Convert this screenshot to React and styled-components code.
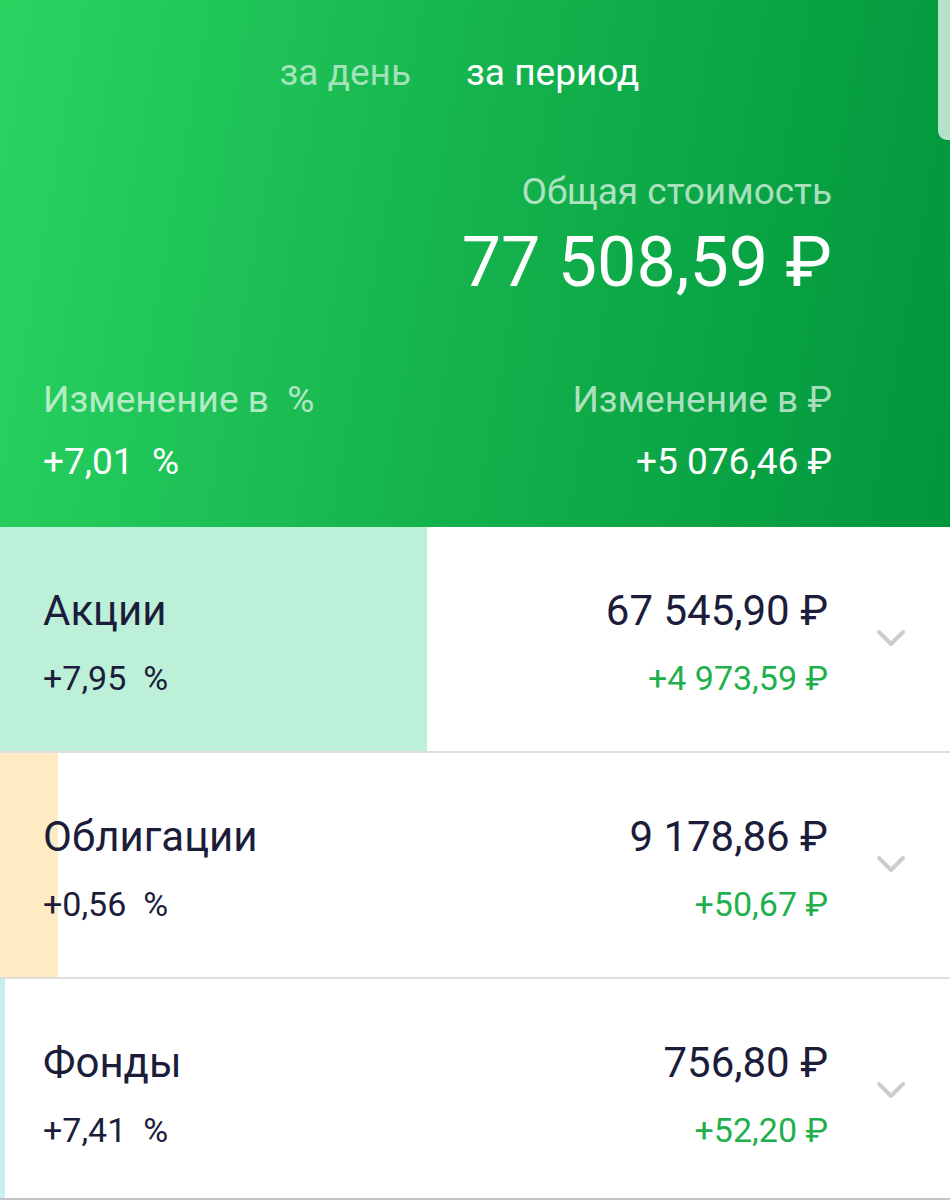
import React from "react";
import styled, { createGlobalStyle } from "styled-components";

const GlobalStyle = createGlobalStyle`
  html, body {
    margin: 0;
    padding: 0;
    background: #ffffff;
  }
  body {
    font-family: Roboto, "Noto Sans", "Liberation Sans", sans-serif;
    -webkit-font-smoothing: antialiased;
  }
`;

const Page = styled.div`
  width: 950px;
  overflow: hidden;
`;

const Header = styled.header`
  position: relative;
  height: 527px;
  box-sizing: border-box;
  padding: 0 118px 0 43px;
  background: linear-gradient(100deg, #29d461 0%, #14b24d 50%, #00963b 100%);
  color: #ffffff;
`;

const PeekCard = styled.div`
  position: absolute;
  top: 0;
  right: 0;
  width: 12px;
  height: 140px;
  background: #b4e2cb;
  border-bottom-left-radius: 9px;
`;

const Tabs = styled.nav`
  height: 150px;
  display: flex;
  align-items: center;
  justify-content: center;
  gap: 55px;
  margin: 0 -118px 0 -43px;
  padding-right: 31px;
`;

const Tab = styled.span`
  font-size: 37px;
  line-height: 44px;
  margin-top: -4px;
  color: ${(p) => (p.$active ? "#ffffff" : "rgba(255, 255, 255, 0.6)")};
`;

const Total = styled.div`
  display: flex;
  flex-direction: column;
  align-items: flex-end;
  margin-top: 20px;
`;

const Label = styled.div`
  font-size: 37px;
  line-height: 44px;
  color: rgba(255, 255, 255, 0.68);
  white-space: pre;
`;

const TotalValue = styled.div`
  font-size: 70px;
  line-height: 82px;
  margin-top: 7px;
`;

const Changes = styled.div`
  display: flex;
  justify-content: space-between;
  margin-top: 75px;
`;

const ChangeCol = styled.div`
  display: flex;
  flex-direction: column;
  align-items: ${(p) => (p.$right ? "flex-end" : "flex-start")};
  gap: 18px;
`;

const ChangeValue = styled.div`
  font-size: 37px;
  line-height: 44px;
  white-space: pre;
`;

const Row = styled.div`
  position: relative;
  box-sizing: border-box;
  height: ${(p) => (p.$last ? "221px" : "226px")};
  display: flex;
  align-items: center;
  padding: ${(p) => (p.$last ? "11px" : "6px")} 44px 0 43px;
  background: #ffffff;
  border-bottom: 2px solid ${(p) => (p.$last ? "#c4c4c4" : "#dedede")};
`;

const Bar = styled.div`
  position: absolute;
  left: 0;
  top: 0;
  bottom: 0;
  background: ${(p) => p.$color};
`;

const Info = styled.div`
  position: relative;
  flex: 1;
  display: flex;
  flex-direction: column;
  gap: 22px;
`;

const Amounts = styled(Info)`
  align-items: flex-end;
`;

const Title = styled.div`
  font-size: 42px;
  line-height: 50px;
  color: #1b1d3a;
  white-space: pre;
`;

const Sub = styled.div`
  font-size: 34px;
  line-height: 40px;
  color: ${(p) => (p.$green ? "#1fb04c" : "#1b1d3a")};
  white-space: pre;
`;

const Chevron = styled.svg`
  position: relative;
  margin: -6px 0 0 48px;
  width: 30px;
  height: 20px;
  flex-shrink: 0;
`;

const rows = [
  { name: "Акции", pct: "+7,95  %", total: "67 545,90 ₽", diff: "+4 973,59 ₽", bar: 427, color: "#bcf0d8" },
  { name: "Облигации", pct: "+0,56  %", total: "9 178,86 ₽", diff: "+50,67 ₽", bar: 58, color: "#feebc3" },
  { name: "Фонды", pct: "+7,41  %", total: "756,80 ₽", diff: "+52,20 ₽", bar: 5, color: "#c8eef1" },
];

export default function App() {
  return (
    <Page>
      <GlobalStyle />
      <Header>
        <PeekCard />
        <Tabs>
          <Tab>за день</Tab>
          <Tab $active>за период</Tab>
        </Tabs>
        <Total>
          <Label>Общая стоимость</Label>
          <TotalValue>77 508,59 ₽</TotalValue>
        </Total>
        <Changes>
          <ChangeCol>
            <Label>{"Изменение в  %"}</Label>
            <ChangeValue>{"+7,01  %"}</ChangeValue>
          </ChangeCol>
          <ChangeCol $right>
            <Label>Изменение в ₽</Label>
            <ChangeValue>+5 076,46 ₽</ChangeValue>
          </ChangeCol>
        </Changes>
      </Header>
      {rows.map((r, i) => (
        <Row key={r.name} $last={i === rows.length - 1}>
          <Bar $color={r.color} style={{ width: r.bar }} />
          <Info>
            <Title>{r.name}</Title>
            <Sub>{r.pct}</Sub>
          </Info>
          <Amounts>
            <Title>{r.total}</Title>
            <Sub $green>{r.diff}</Sub>
          </Amounts>
          <Chevron viewBox="0 0 30 20">
            <polyline
              points="3,3 15,15 27,3"
              fill="none"
              stroke="#cccccc"
              strokeWidth="4"
              strokeLinecap="round"
              strokeLinejoin="round"
            />
          </Chevron>
        </Row>
      ))}
    </Page>
  );
}
